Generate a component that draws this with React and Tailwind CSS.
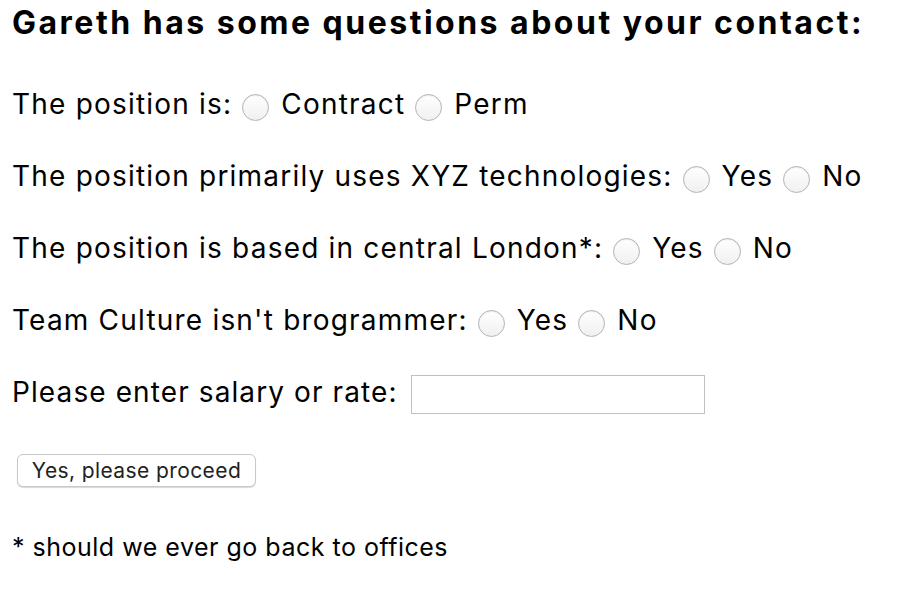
// Contact questions form
function Radio() {
  return (
    <span className="inline-block shrink-0 w-[27px] h-[27px] rounded-full border border-[#b4b4b4] bg-gradient-to-b from-white to-[#f0f0f0] shadow-[inset_0_1px_1px_rgba(0,0,0,0.08)] ml-[10px] mr-[12px] translate-y-[3px]"></span>
  );
}

function Question({ label, options }) {
  return (
    <div className="h-[72px] flex items-center text-[28px] tracking-[1.2px] leading-none whitespace-nowrap">
      <span>{label}</span>
      {options.map((opt) => (
        <span key={opt} className="inline-flex items-center">
          <Radio />
          <span>{opt}</span>
        </span>
      ))}
    </div>
  );
}

export default function App() {
  const questions = [
    { label: 'The position is:', options: ['Contract', 'Perm'] },
    { label: 'The position primarily uses XYZ technologies:', options: ['Yes', 'No'] },
    { label: 'The position is based in central London*:', options: ['Yes', 'No'] },
    { label: "Team Culture isn't brogrammer:", options: ['Yes', 'No'] },
  ];

  return (
    <div className="bg-white text-black px-3 pt-[3px] w-[918px] h-[594px] font-['Inter','Liberation_Sans',sans-serif]">
      <h3 className="text-[32px] font-bold leading-[40px] tracking-[2.5px] whitespace-nowrap">
        Gareth has some questions about your contact:
      </h3>
      <div className="mt-[25px]">
        {questions.map((q) => (
          <Question key={q.label} label={q.label} options={q.options} />
        ))}
        <div className="h-[72px] flex items-center text-[28px] tracking-[1.1px] leading-none">
          <span>Please enter salary or rate:</span>
          <input
            type="text"
            className="ml-[13px] w-[294px] h-[39px] border border-[#c0c0c0] bg-white outline-none translate-y-[2px]"
          />
        </div>
      </div>
      <button className="mt-[26px] ml-[5px] w-[239px] h-[33px] rounded-[6px] border border-[#c8c8c8] bg-white text-[21px] tracking-[0.4px] text-[#222] shadow-[0_1px_1px_rgba(0,0,0,0.15)] leading-none">
        Yes, please proceed
      </button>
      <p className="mt-[48px] text-[25px] tracking-[0.5px] leading-none">* should we ever go back to offices</p>
    </div>
  );
}
